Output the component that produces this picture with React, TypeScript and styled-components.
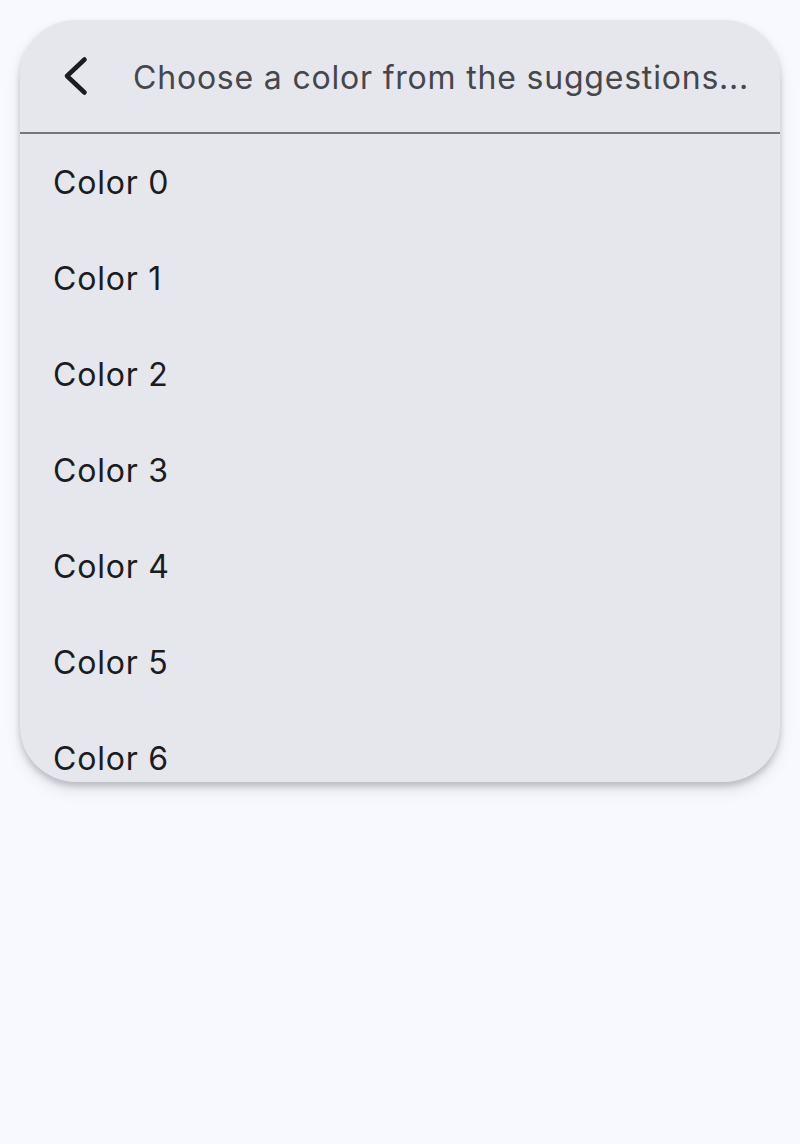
import React from "react";
import styled, { createGlobalStyle } from "styled-components";

const Global = createGlobalStyle`
  html, body { margin: 0; padding: 0; background: #f8f9ff; }
  body { font-family: Inter, "Noto Sans", sans-serif; }
`;

const Page = styled.div`
  padding: 20px;
  width: 800px;
  height: 1144px;
  box-sizing: border-box;
`;

const Card = styled.div`
  height: 762px;
  background: #e6e7ec;
  border-radius: 56px;
  overflow: hidden;
  box-shadow: 0 4px 6px rgba(0, 0, 0, 0.18), 0 8px 16px rgba(0, 0, 0, 0.1);
  display: flex;
  flex-direction: column;
`;

const Header = styled.div`
  height: 114px;
  flex: none;
  display: flex;
  align-items: center;
  padding-left: 32px;
  padding-right: 28px;
  border-bottom: 2px solid #74777f;
  box-sizing: border-box;
`;

const BackButton = styled.div`
  width: 48px;
  height: 48px;
  display: flex;
  align-items: center;
  justify-content: center;
  color: #1b1c20;
  margin-right: 33px;
  flex: none;
`;

const Hint = styled.div`
  font-size: 32px;
  color: #45474c;
  letter-spacing: 0.8px;
  white-space: nowrap;
  overflow: hidden;
  text-overflow: ellipsis;
  margin-top: 2px;
  min-width: 0;
`;

const List = styled.div`
  display: flex;
  flex-direction: column;
`;

const Item = styled.div`
  height: 96px;
  flex: none;
  display: flex;
  align-items: center;
  padding-left: 33px;
  font-size: 32px;
  color: #1b1c20;
  letter-spacing: 0.8px;
`;

export default function App() {
  const items = Array.from({ length: 7 }, (_, i) => `Color ${i}`);
  return (
    <>
      <Global />
      <Page>
        <Card>
          <Header>
            <BackButton>
              <svg width="48" height="48" viewBox="0 0 48 48" fill="none">
                <path
                  d="M32.5 7.5 L15 24 L32.5 40.5"
                  stroke="currentColor"
                  strokeWidth="4.6"
                  strokeLinecap="round"
                  strokeLinejoin="round"
                />
              </svg>
            </BackButton>
            <Hint>Choose a color from the suggestions...</Hint>
          </Header>
          <List>
            {items.map((t) => (
              <Item key={t}>{t}</Item>
            ))}
          </List>
        </Card>
      </Page>
    </>
  );
}
